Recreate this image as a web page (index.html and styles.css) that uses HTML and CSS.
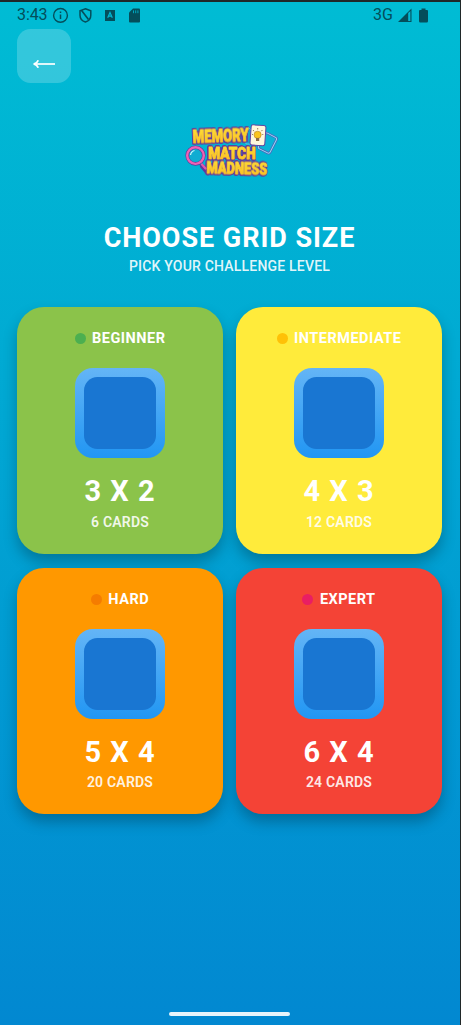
FILE: index.html
```html
<!DOCTYPE html>
<html lang="en">
<head>
<meta charset="utf-8">
<title>Memory Match Madness</title>
<link rel="stylesheet" href="styles.css">
</head>
<body>
<div class="screen">
  <header class="status">
    <span class="time">3:43</span>
    <svg class="status-left" width="92" height="18" viewBox="0 0 92 18" fill="none" stroke="#044e5b">
      <circle cx="8.5" cy="9.4" r="6.9" stroke-width="1.4"/>
      <path d="M8.5 8.4V13M8.5 5.4V7" stroke-width="1.5"/>
      <path d="M33.4 2.7L38.8 4.8V9.2C38.8 12.4 36.6 15 33.4 16C30.2 15 28 12.4 28 9.2V4.8Z" stroke-width="1.5"/>
      <path d="M29.6 4.6L36.5 13.4" stroke-width="1.7"/>
      <rect x="53" y="4" width="10" height="11" fill="#044e5b" stroke="none"/>
      <path d="M55.7 11.7L58 6.5L60.3 11.7M56.5 10.2H59.5" stroke="#00b9d5" stroke-width="1.2"/>
      <path d="M81 2.5H87Q88 2.5 88 3.5V15.5Q88 16.5 87 16.5H78Q77 16.5 77 15.5V6.5Z" fill="#044e5b" stroke="none"/>
      <path d="M81.5 4.4V7.2M83.7 4.4V7.2M85.9 4.4V7.2" stroke="#00a9c0" stroke-width="1"/>
    </svg>
    <span class="network">3G</span>
    <svg class="status-right" width="34" height="18" viewBox="0 0 34 18" fill="#044e5b">
      <path d="M1 16L14.5 2.5V16Z"/>
      <path d="M11.2 7L13.4 5V15H11.2Z" fill="#00b9d5"/>
      <path d="M24.5 2.5H28.5V4H30Q31 4 31 5V15Q31 16.5 29.7 16.5H23.3Q22 16.5 22 15V5Q22 4 23 4H24.5Z"/>
    </svg>
  </header>

  <button class="back" aria-label="Back">
    <svg width="24" height="12" viewBox="0 0 24 12" fill="none" stroke="#fff" stroke-width="1.7">
      <path d="M2 6H23"/><path d="M6.2 2.2C5.6 4 4 5.5 1.6 6C4 6.5 5.6 8 6.2 9.8"/>
    </svg>
  </button>

  <svg class="logo" width="100" height="60" viewBox="180 120 100 60">
    <defs>
      <linearGradient id="gold" x1="0" y1="0" x2="0" y2="1">
        <stop offset="0" stop-color="#ffdf35"/><stop offset="1" stop-color="#fbbd22"/>
      </linearGradient>
    </defs>
    <rect x="261" y="134.3" width="13" height="17.5" rx="2" transform="rotate(27 267.5 143)" fill="#09b3d6" stroke="#5b55b8" stroke-width="2.4"/>
    <rect x="261" y="134.3" width="13" height="17.5" rx="2" transform="rotate(27 267.5 143)" fill="none" stroke="#8ceaf3" stroke-width=".9"/>
    <path d="M241 129L248 127L252 131V144H246Z" fill="#159fd0" stroke="#67cfe3" stroke-width=".8"/>
    <path d="M202 166L208 173" stroke="#62379c" stroke-width="4.5" stroke-linecap="round"/>
    <path class="backing" d="M194 131L248 129V142L194 143ZM209 147H255V159H209ZM208 163L267 165V175L208 174Z"/>
    <g class="logo-text">
      <text x="192.8" y="142.5" font-size="17.5" textLength="56" lengthAdjust="spacingAndGlyphs" transform="rotate(-2 220 138)">MEMORY</text>
      <text x="208.3" y="158.5" font-size="17" textLength="47.5" lengthAdjust="spacingAndGlyphs">MATCH</text>
      <text x="206.4" y="173.8" font-size="16" textLength="61" lengthAdjust="spacingAndGlyphs" transform="rotate(1.5 236 168)">MADNESS</text>
    </g>
    <rect x="250.6" y="125.2" width="14.8" height="20.2" rx="2" transform="rotate(4 258 135)" fill="#fff7dc" stroke="#62439f" stroke-width="1"/>
    <circle cx="257.6" cy="134.8" r="3.6" fill="#fac51e" stroke="#b78025" stroke-width=".6"/>
    <path d="M256 138H259.2V141H256Z" fill="#8b6b4a"/>
    <path d="M257.7 128V129.5M253 130L254 131.2M262.4 130L261.4 131.2M252 134.5H253M262.2 134.5H263.3" stroke="#77613e" stroke-width=".8"/>
    <circle cx="195.5" cy="155.6" r="8.3" fill="#10acd2" stroke="#613799" stroke-width="3.6"/>
    <circle cx="195.5" cy="155.6" r="8.3" fill="none" stroke="#ee62b5" stroke-width="2.4"/>
    <path d="M190.5 155Q191 151.5 194.5 150.5" fill="none" stroke="#c8f5fa" stroke-width="1.3"/>
    <path d="M202 164.5L205.5 168.5" stroke="#e257ac" stroke-width="2.2" stroke-linecap="round"/>
  </svg>

  <h1 class="title">CHOOSE GRID SIZE</h1>
  <p class="subtitle">PICK YOUR CHALLENGE LEVEL</p>

  <main class="grid">
    <section class="card beginner">
      <div class="level"><i class="dot"></i>BEGINNER</div>
      <div class="tile"></div>
      <div class="size">3 X 2</div>
      <div class="count">6 CARDS</div>
    </section>
    <section class="card intermediate">
      <div class="level"><i class="dot"></i>INTERMEDIATE</div>
      <div class="tile"></div>
      <div class="size">4 X 3</div>
      <div class="count">12 CARDS</div>
    </section>
    <section class="card hard">
      <div class="level"><i class="dot"></i>HARD</div>
      <div class="tile"></div>
      <div class="size">5 X 4</div>
      <div class="count">20 CARDS</div>
    </section>
    <section class="card expert">
      <div class="level"><i class="dot"></i>EXPERT</div>
      <div class="tile"></div>
      <div class="size">6 X 4</div>
      <div class="count">24 CARDS</div>
    </section>
  </main>
  <div class="home-bar"></div>
</div>
</body>
</html>
```
FILE: styles.css
```css
* { box-sizing: border-box; }
body { margin: 0; background: #202829; font-family: Roboto, "Liberation Sans", sans-serif; }
.screen {
  display: flex;
  flex-direction: column;
  height: 1025px;
  padding: 0 18px 9px 17px;
  border-top: 2px solid #202829;
  border-right: 1px solid #202829;
  background: linear-gradient(#00bcd4, #0288d1);
  color: #fff;
}
.status {
  display: flex;
  align-items: center;
  height: 27px;
  padding-bottom: 1px;
  color: #044e5b;
  font-size: 16px;
  line-height: 26px;
}
.status svg { margin-top: -1px; }
.time { width: 35px; letter-spacing: -.1px; }
.network { margin-left: auto; }
.status .status-right { margin: -1px 11px 0 4px; }
.back {
  display: flex;
  justify-content: center;
  align-items: center;
  width: 54px;
  height: 54px;
  padding: 16px 0 0;
  border: 0;
  border-radius: 13.5px;
  background: rgba(255, 255, 255, .2);
}
.logo { display: block; margin: 37px 0 0 163px; overflow: visible; }
.logo-text text {
  font-family: Roboto, sans-serif;
  font-weight: 900;
  fill: url(#gold);
  stroke: url(#gold);
  stroke-width: .9px;
  stroke-linejoin: round;
  filter: drop-shadow(.7px 0 0 #653a99) drop-shadow(-.7px 0 0 #653a99) drop-shadow(0 1px 0 #653a99) drop-shadow(0 -.5px 0 #653a99);
}
.backing { fill: #653a99; opacity: .75; }
.title {
  margin: 42px 0 0;
  font-size: 27px;
  line-height: 32px;
  font-weight: 700;
  letter-spacing: .95px;
  text-align: center;
}
.subtitle {
  margin: 4px 0 0;
  font-size: 14px;
  line-height: 16px;
  font-weight: 500;
  letter-spacing: .2px;
  text-align: center;
  color: rgba(255, 255, 255, .9);
}
.grid {
  display: grid;
  grid-template-columns: 206px 206px;
  grid-auto-rows: 246.5px;
  gap: 14px 13px;
  margin-top: 33px;
}
.card {
  display: flex;
  flex-direction: column;
  align-items: center;
  padding-top: 22.5px;
  border-radius: 27px;
  box-shadow: 0 8px 14px rgba(0, 0, 0, .25);
}
.beginner { background: #8bc34a; }
.intermediate { background: #ffeb3b; }
.hard { background: #ff9800; }
.expert { background: #f44336; }
.level {
  display: flex;
  align-items: center;
  gap: 6.5px;
  height: 18px;
  font-size: 14.5px;
  font-weight: 700;
  letter-spacing: .5px;
}
.dot { width: 11px; height: 11px; border-radius: 50%; }
.beginner .dot { background: #4caf50; }
.intermediate .dot { background: #ffc107; }
.hard .dot { background: #f57c00; }
.expert .dot { background: #e91e63; }
.tile {
  width: 90px;
  height: 90px;
  margin-top: 20.9px;
  padding: 9px;
  border-radius: 18px;
  background: linear-gradient(#64b5f6, #2196f3);
}
.tile::before {
  content: "";
  display: block;
  height: 72px;
  border-radius: 13.5px;
  background: #1976d2;
}
.size {
  margin-top: 16.1px;
  font-size: 29px;
  line-height: 34px;
  font-weight: 700;
  letter-spacing: 1px;
}
.count {
  margin-top: 5.5px;
  font-size: 14px;
  line-height: 16px;
  font-weight: 600;
  letter-spacing: .2px;
  color: rgba(255, 255, 255, .9);
}
.home-bar {
  width: 121px;
  height: 4px;
  margin: auto 0 0 152px;
  border-radius: 2px;
  background: #e8f4fb;
}
```
